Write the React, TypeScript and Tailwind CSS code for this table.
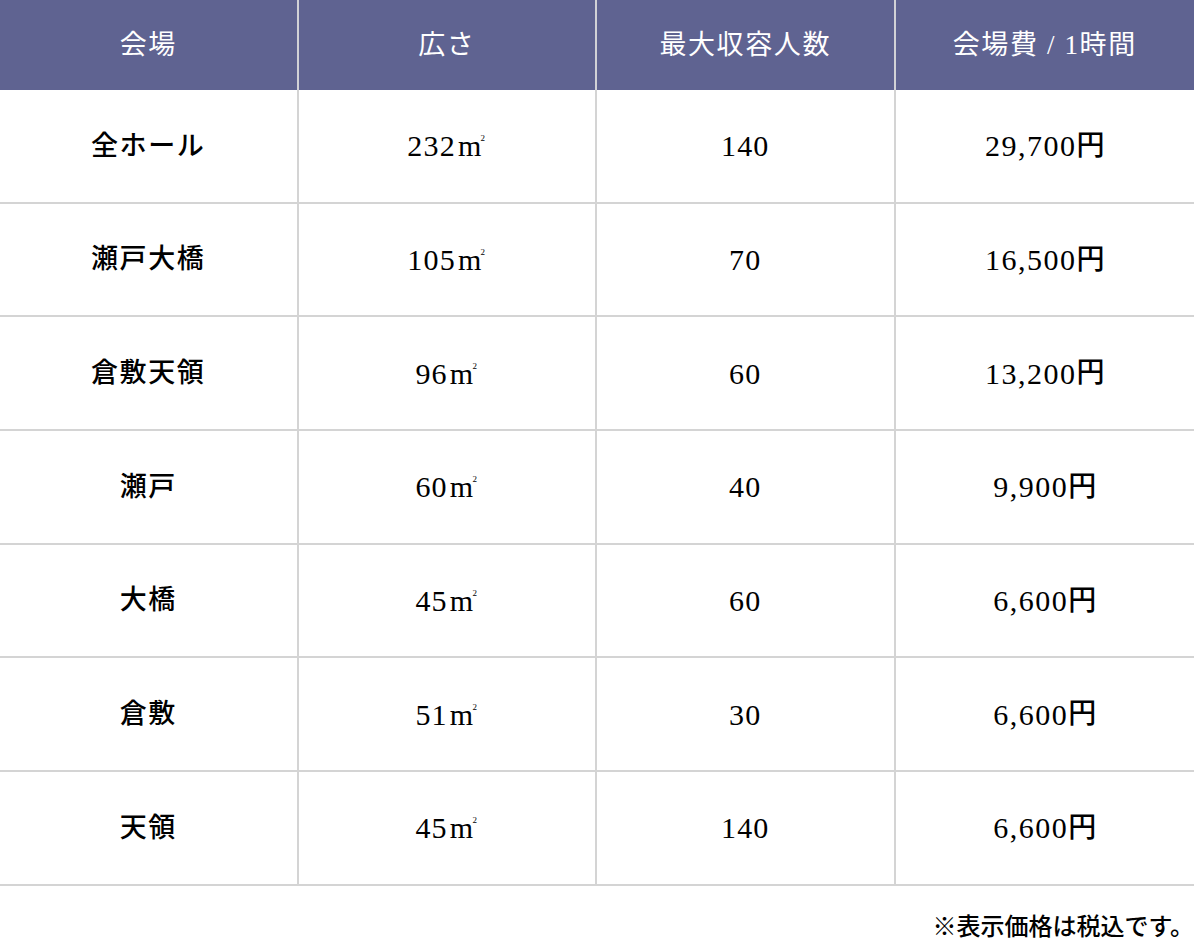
import React from "react";

type Row = {
  name: string;
  area: string;
  capacity: string;
  price: string;
};

const rows: Row[] = [
  { name: "全ホール", area: "232", capacity: "140", price: "29,700" },
  { name: "瀬戸大橋", area: "105", capacity: "70", price: "16,500" },
  { name: "倉敷天領", area: "96", capacity: "60", price: "13,200" },
  { name: "瀬戸", area: "60", capacity: "40", price: "9,900" },
  { name: "大橋", area: "45", capacity: "60", price: "6,600" },
  { name: "倉敷", area: "51", capacity: "30", price: "6,600" },
  { name: "天領", area: "45", capacity: "140", price: "6,600" },
];

const headers = ["会場", "広さ", "最大収容人数", "会場費 / 1時間"];

// square metre mark drawn as m + small 2, like the reference
const SquareMetre = () => (
  <span className="ml-[2px] inline-block">
    m<span className="ml-[-2px] align-[15px] text-[9px] leading-none">2</span>
  </span>
);

export default function App() {
  return (
    <div
      className="h-[947px] w-[1200px] bg-white text-black"
      style={{ fontFamily: '"Liberation Serif", "Noto Sans CJK JP", serif' }}
    >
      <div className="grid w-[1194px] grid-cols-4">
        {headers.map((h, i) => (
          <div
            key={h}
            className={`flex h-[90px] items-center justify-center bg-[#5f6391] text-[27px] tracking-[0.06em] text-white ${
              i < 3 ? "border-r-2 border-[#d2d2d6]" : ""
            }`}
          >
            {h}
          </div>
        ))}
        {rows.map((row) => (
          <React.Fragment key={row.name}>
            <div className="flex h-[113.7px] items-center justify-center border-b-2 border-r-2 border-[#d4d4d4] text-[27px] font-medium tracking-[0.06em]">
              {row.name}
            </div>
            <div className="flex h-[113.7px] items-center justify-center border-b-2 border-r-2 border-[#d4d4d4] text-[30px] tracking-[0.04em]">
              <span>
                {row.area}
                <SquareMetre />
              </span>
            </div>
            <div className="flex h-[113.7px] items-center justify-center border-b-2 border-r-2 border-[#d4d4d4] text-[30px] tracking-[0.04em]">
              {row.capacity}
            </div>
            <div className="flex h-[113.7px] items-center justify-center border-b-2 border-[#d4d4d4] text-[30px] tracking-[0.05em]">
              {row.price}
              <span className="text-[28px] font-medium tracking-normal">円</span>
            </div>
          </React.Fragment>
        ))}
      </div>
      <div className="flex justify-end pr-[6px] pt-[26px] text-[24px] font-medium leading-[30px]">
        ※表示価格は税込です。
      </div>
    </div>
  );
}
